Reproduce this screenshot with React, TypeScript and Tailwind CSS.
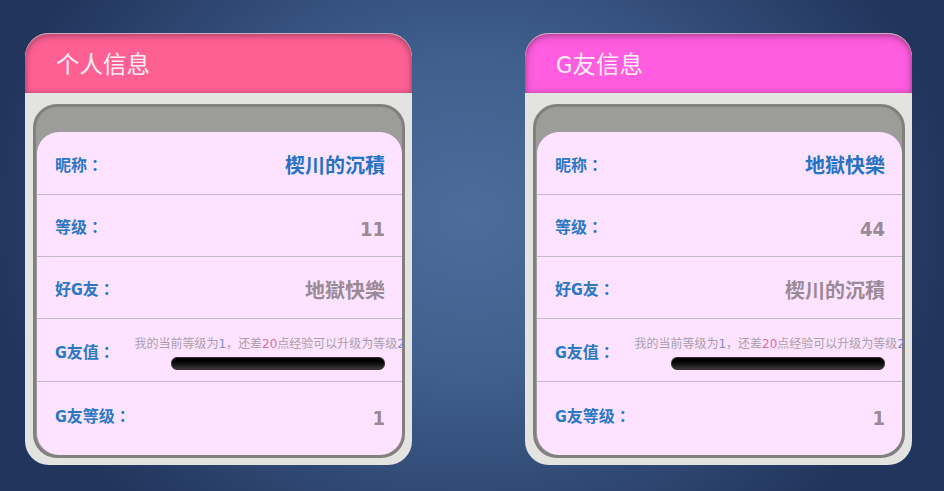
const F = '[font-family:"DejaVu_Sans","Noto_Sans_CJK_SC",sans-serif]';
const L = '[font-family:"DejaVu_Sans","Noto_Sans_CJK_TC",sans-serif]';

function Row({ label, children, h, last }: { label: string; children: React.ReactNode; h: string; last?: boolean }) {
  return (
    <div className={`flex items-center justify-between pt-[5px] pl-[18px] pr-[17px] ${h} ${last ? "" : "border-b border-[#c2bcc2]"}`}>
      <span className={`text-[16px] font-bold text-[#2b78c5] whitespace-nowrap leading-none font-stretch-condensed ${L}`}>{label}</span>
      {children}
    </div>
  );
}

function Val({ children, blue }: { children: React.ReactNode; blue?: boolean }) {
  return <span className={`mt-[1px] text-[20px] font-bold leading-none font-stretch-condensed ${blue ? "text-[#2473c4]" : "text-[#9a8a96]"}`}>{children}</span>;
}

function Card({ title, color, name, level, friend }: { title: string; color: string; name: string; level: string; friend: string }) {
  return (
    <div className="w-[387px] h-[432px] rounded-[24px] bg-[#e3e3e1] overflow-hidden flex flex-col">
      <div className={`h-[60px] shrink-0 rounded-t-[24px] pl-[31px] pt-[6px] flex items-center text-[23.5px] text-[#fdeef5] font-stretch-condensed ${color} shadow-[inset_0_1px_0_rgba(225,205,215,0.75),inset_0_3px_7px_rgba(100,50,80,0.5),inset_0_0_5px_rgba(100,50,80,0.35)]`}>
        {title}
      </div>
      <div className="mt-[11px] ml-[8px] w-[372px] h-[354px] rounded-[24px] bg-[#9c9c9a] border-[3px] border-[#827f7f] pt-[25px] flex flex-col">
        <div className="w-[365px] ml-px h-[323px] rounded-[22px] bg-[#fde3ff]">
          <Row h="h-[63px]" label="昵称："><Val blue>{name}</Val></Row>
          <Row h="h-[62px]" label="等级："><Val>{level}</Val></Row>
          <Row h="h-[62px]" label="好G友："><Val>{friend}</Val></Row>
          <Row h="h-[63px]" label="G友值：">
            <div className="flex flex-col items-end w-[214px] relative mt-[9px] pt-[13px]">
              <span className="absolute right-[-20px] top-[-6px] text-[12px] leading-none whitespace-nowrap text-[#a99fa9]">
                我的当前等级为<span className="text-[#7c8fd0]">1</span>，还差<span className="text-[#e6689a]">20</span>点经验可以升级为等级<span className="text-[#7c8fd0]">2</span>
              </span>
              <div className="w-[214px] h-[13px] rounded-[6px] bg-gradient-to-b from-[#000000] to-[#3a3636] border border-[#3a3035]" />
            </div>
          </Row>
          <Row h="h-[65px]" label="G友等级：" last><Val>1</Val></Row>
        </div>
      </div>
    </div>
  );
}

export default function App() {
  return (
    <div className={`w-[944px] h-[491px] overflow-hidden flex items-start pt-[33px] pl-[25px] gap-[113px] bg-[radial-gradient(ellipse_480px_400px_at_470px_215px,#4c6c9b_0%,#3f5f8d_40%,#22355d_100%)] ${F}`}>
      <Card title="个人信息" color="bg-[#ff6094]" name="楔川的沉積" level="11" friend="地獄快樂" />
      <Card title="G友信息" color="bg-[#ff5ce0]" name="地獄快樂" level="44" friend="楔川的沉積" />
    </div>
  );
}
